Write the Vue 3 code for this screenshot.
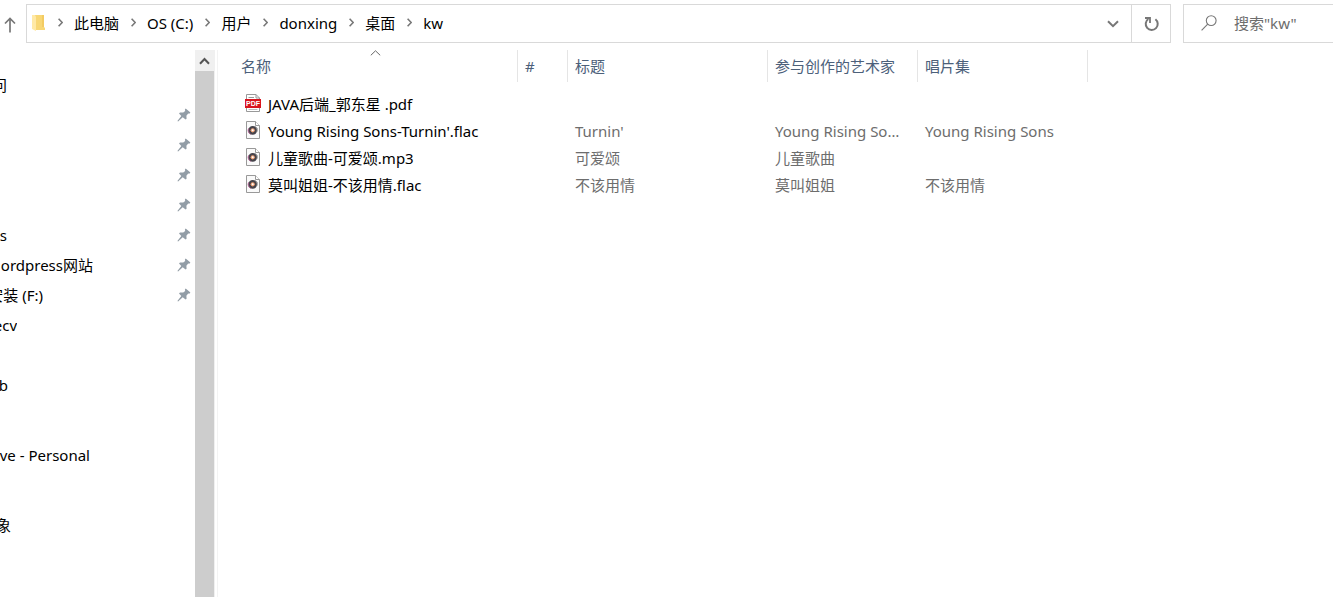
<script setup>
import { ref } from 'vue'

const crumbs = ['此电脑', 'OS (C:)', '用户', 'donxing', '桌面', 'kw']
const query = ref('')

// extent: how far the label reaches into the visible part of the pane
const tree = [
  { label: '问', extent: 7 },
  { label: '', extent: 0, pinned: true },
  { label: '', extent: 0, pinned: true },
  { label: '', extent: 0, pinned: true },
  { label: '', extent: 0, pinned: true },
  { label: 's', extent: 7, pinned: true },
  { label: 'ordpress网站', extent: 93, pinned: true },
  { label: '安装 (F:)', extent: 43, pinned: true },
  { label: 'ecv', extent: 17 },
  { label: '', extent: 0 },
  { label: 'b', extent: 8 },
  { label: '', extent: 0 },
  { label: 've - Personal', extent: 90, group: true },
  { label: '', extent: 0, group: true },
  { label: '象', extent: 11 },
]

const columns = [
  { title: '名称', cls: 'c-name', sorted: true },
  { title: '#', cls: 'c-num' },
  { title: '标题', cls: 'c-title' },
  { title: '参与创作的艺术家', cls: 'c-artist' },
  { title: '唱片集', cls: 'c-album' },
]

const files = [
  { name: 'JAVA后端_郭东星 .pdf', type: 'pdf', title: '', artist: '', album: '' },
  { name: "Young Rising Sons-Turnin'.flac", type: 'audio', title: "Turnin'", artist: 'Young Rising Sons', album: 'Young Rising Sons' },
  { name: '儿童歌曲-可爱颂.mp3', type: 'audio', title: '可爱颂', artist: '儿童歌曲', album: '' },
  { name: '莫叫姐姐-不该用情.flac', type: 'audio', title: '不该用情', artist: '莫叫姐姐', album: '不该用情' },
]
</script>

<template>
  <div class="explorer">
    <header class="toolbar">
      <button class="up" aria-label="上移">
        <svg width="12" height="16" viewBox="0 0 12 16" fill="none" stroke="#777" stroke-width="1.7">
          <path d="M6 15.5V1.5M1 6.5L6 1.5L11 6.5" />
        </svg>
      </button>
      <div class="address">
        <svg class="folder" width="13" height="16" viewBox="0 0 13 16">
          <path d="M3 0h9v12l1 1v2H3z" fill="#f8d775" />
          <path d="M10 0h2v12h-2z" fill="#f3cb62" />
          <path d="M0 0h3l1 2v14L0 14z" fill="#ffe9a6" />
        </svg>
        <nav class="crumbs" aria-label="路径">
          <template v-for="c in crumbs" :key="c">
            <svg class="sep" width="5" height="9" viewBox="0 0 5 9" fill="none" stroke="#777" stroke-width="1.6">
              <path d="M.6 .8L4.2 4.5L.6 8.2" />
            </svg>
            <a href="#">{{ c }}</a>
          </template>
        </nav>
        <button class="drop" aria-label="历史记录">
          <svg width="12" height="8" viewBox="0 0 12 8" fill="none" stroke="#777" stroke-width="2">
            <path d="M1 1.2L6 6.2L11 1.2" />
          </svg>
        </button>
        <button class="refresh" aria-label="刷新">
          <svg width="16" height="16" viewBox="0 0 16 16" fill="none" stroke="#777" stroke-width="2">
            <path d="M12.4 3.2A6 6 0 1 1 5.3 3" />
            <path d="M2 2H7V7" stroke-width="1.8" />
          </svg>
        </button>
      </div>
      <label class="search">
        <svg width="16" height="16" viewBox="0 0 16 16" fill="none" stroke="#777" stroke-width="1.1">
          <circle cx="10.2" cy="5.6" r="4.9" />
          <path d="M6.7 9.1L.6 15.3" />
        </svg>
        <input v-model="query" type="text" placeholder='搜索"kw"' aria-label="搜索" />
      </label>
    </header>

    <div class="body">
      <aside class="pane">
        <ul class="tree">
          <li v-for="(n, i) in tree" :key="i" :class="{ group: n.group }">
            <span class="label" :style="{ width: n.extent + 'px' }">{{ n.label }}</span>
            <svg v-if="n.pinned" width="14" height="14" viewBox="0 0 14 14" fill="#929da6">
              <path d="M8.7 .6L13.4 4.6L12.3 5.7L11.2 5.4L9.4 7.7L9.6 10.8L8.6 11.6L5.7 9.3L1.1 13.6L.4 12.9L4.3 7.9L2 5.4L3 4.5L6.2 4.6L8.2 2.9L7.9 1.6Z" />
            </svg>
          </li>
        </ul>
        <div class="scroll">
          <button aria-label="向上滚动">
            <svg width="11" height="8" viewBox="0 0 11 8" fill="none" stroke="#555" stroke-width="2">
              <path d="M1 6.8L5.5 2L10 6.8" />
            </svg>
          </button>
          <div class="thumb"></div>
        </div>
      </aside>

      <main class="content">
        <table>
          <thead>
            <tr>
              <th v-for="c in columns" :key="c.title" :class="c.cls" scope="col">
                <svg v-if="c.sorted" class="caret" width="11" height="6" viewBox="0 0 11 6" fill="none" stroke="#666" stroke-width="1">
                  <path d="M.8 5.3L5.5 .8L10.2 5.3" />
                </svg>
                {{ c.title }}
              </th>
            </tr>
          </thead>
          <tbody>
            <tr class="spacer" aria-hidden="true"><td colspan="5"></td></tr>
            <tr v-for="f in files" :key="f.name">
              <td class="name">
                <div class="file">
                  <svg v-if="f.type === 'pdf'" width="16" height="18" viewBox="0 0 16 18">
                    <path d="M1.5 .5H11L14.5 4V17.5H1.5Z" fill="#fff" stroke="#999" />
                    <path d="M11 .5V4H14.5M3.5 3.5H9" fill="none" stroke="#999" />
                    <path d="M0 5H16V14H0Z" fill="#d9141e" />
                    <path d="M3.5 15.5H12.5" stroke="#bbb" />
                    <text x="8" y="12" text-anchor="middle" class="badge">PDF</text>
                  </svg>
                  <svg v-else width="16" height="18" viewBox="0 0 16 18">
                    <path d="M1.5 .5H10.5L14.5 4.5V17.5H1.5Z" fill="#fafafa" stroke="#999" />
                    <path d="M10.5 .5V4.5H14.5" fill="#fff" stroke="#999" />
                    <circle cx="7.7" cy="9.3" r="4.4" fill="#46434a" />
                    <path d="M3.6 7.4A4.5 4.5 0 0 0 5.8 13.4" fill="none" stroke="#a85a8c" stroke-width="1" />
                    <path d="M9.8 5.2A4.5 4.5 0 0 1 11.8 11" fill="none" stroke="#777" stroke-width="1" />
                    <circle cx="7.7" cy="9.3" r="2.1" fill="#f0a276" />
                    <circle cx="7.7" cy="9.3" r="1" fill="#fff" />
                  </svg>
                  <span>{{ f.name }}</span>
                </div>
              </td>
              <td></td>
              <td>{{ f.title }}</td>
              <td>{{ f.artist }}</td>
              <td>{{ f.album }}</td>
            </tr>
          </tbody>
        </table>
      </main>
    </div>
  </div>
</template>

<style>
body {
  background: #fff;
}
</style>

<style scoped>
.explorer {
  display: flex;
  flex-direction: column;
  min-height: 100vh;
  overflow: hidden;
  font: 15px/20px "Noto Sans", "Noto Sans CJK SC", sans-serif;
  color: #000;
}
button {
  display: flex;
  align-items: center;
  justify-content: center;
  padding: 0;
  border: 0;
  background: none;
}
.toolbar {
  display: flex;
  padding-top: 4px;
}
.up {
  width: 20px;
  margin-right: 6px;
  padding-top: 3px;
}
.address {
  display: flex;
  flex: 1;
  align-items: center;
  box-sizing: border-box;
  height: 39px;
  padding-left: 5px;
  border: 1px solid #d9d9d9;
}
.crumbs {
  display: flex;
  flex: 1;
  align-items: center;
  padding-bottom: 2px;
}
.folder {
  margin: 0 1px 2px 0;
}
.sep {
  margin: 0 11px 0 12px;
}
.crumbs a {
  color: #000;
  text-decoration: none;
}
.drop {
  width: 37px;
  height: 37px;
}
.refresh {
  width: 39px;
  height: 37px;
  border-left: 1px solid #d9d9d9;
}
.search {
  display: flex;
  align-items: center;
  box-sizing: border-box;
  width: 150px;
  margin-left: 12px;
  padding: 0 0 2px 17px;
  gap: 17px;
  border: 1px solid #d9d9d9;
  border-right: 0;
}
.search svg {
  flex: none;
}
.search input {
  width: 100%;
  min-width: 0;
  padding: 0;
  border: 0;
  outline: 0;
  background: none;
  font: inherit;
}
.search input::placeholder {
  color: #6d6d6d;
  opacity: 1;
}
.body {
  display: flex;
  flex: 1;
  padding-top: 7px;
}
.pane {
  display: flex;
  width: 217px;
  border-right: 1px solid #f3f3f3;
}
.tree {
  flex: 1;
  margin: 0;
  padding: 20px 4px 0 0;
  list-style: none;
}
.tree li {
  display: flex;
  align-items: center;
  justify-content: space-between;
  height: 30px;
}
.tree .group {
  margin-top: 10px;
}
.label {
  display: flex;
  justify-content: flex-end;
  overflow: hidden;
  white-space: nowrap;
}
.scroll {
  display: flex;
  flex-direction: column;
  width: 20px;
  margin-right: 2px;
  background: #f0f0f0;
}
.scroll button {
  width: 19px;
  height: 21px;
}
.thumb {
  flex: 1;
  width: 19px;
  background: #cdcdcd;
}
.content {
  flex: 1;
  padding-left: 16px;
}
table {
  width: 854px;
  border-collapse: separate;
  border-spacing: 0;
  table-layout: fixed;
}
th {
  position: relative;
  height: 32px;
  padding: 0 7px;
  border-right: 1px solid #e5e5e5;
  box-sizing: border-box;
  color: #4c607a;
  font-weight: 400;
  text-align: left;
}
.c-name {
  width: 284px;
}
.c-num {
  width: 50px;
}
.c-title {
  width: 200px;
}
.c-artist {
  width: 150px;
}
.c-album {
  width: 170px;
}
.caret {
  position: absolute;
  top: 0;
  left: 136px;
}
td {
  height: 27px;
  padding: 0 16px 0 7px;
  overflow: hidden;
  color: #6d6d6d;
  text-overflow: ellipsis;
  white-space: nowrap;
}
.spacer td {
  height: 8px;
}
.name {
  padding: 0 0 0 11px;
  color: #000;
}
.file {
  display: flex;
  align-items: center;
  gap: 7px;
}
.file svg {
  margin-bottom: 2px;
}
.badge {
  fill: #fff;
  font: bold 7px "Liberation Sans", sans-serif;
}
</style>
